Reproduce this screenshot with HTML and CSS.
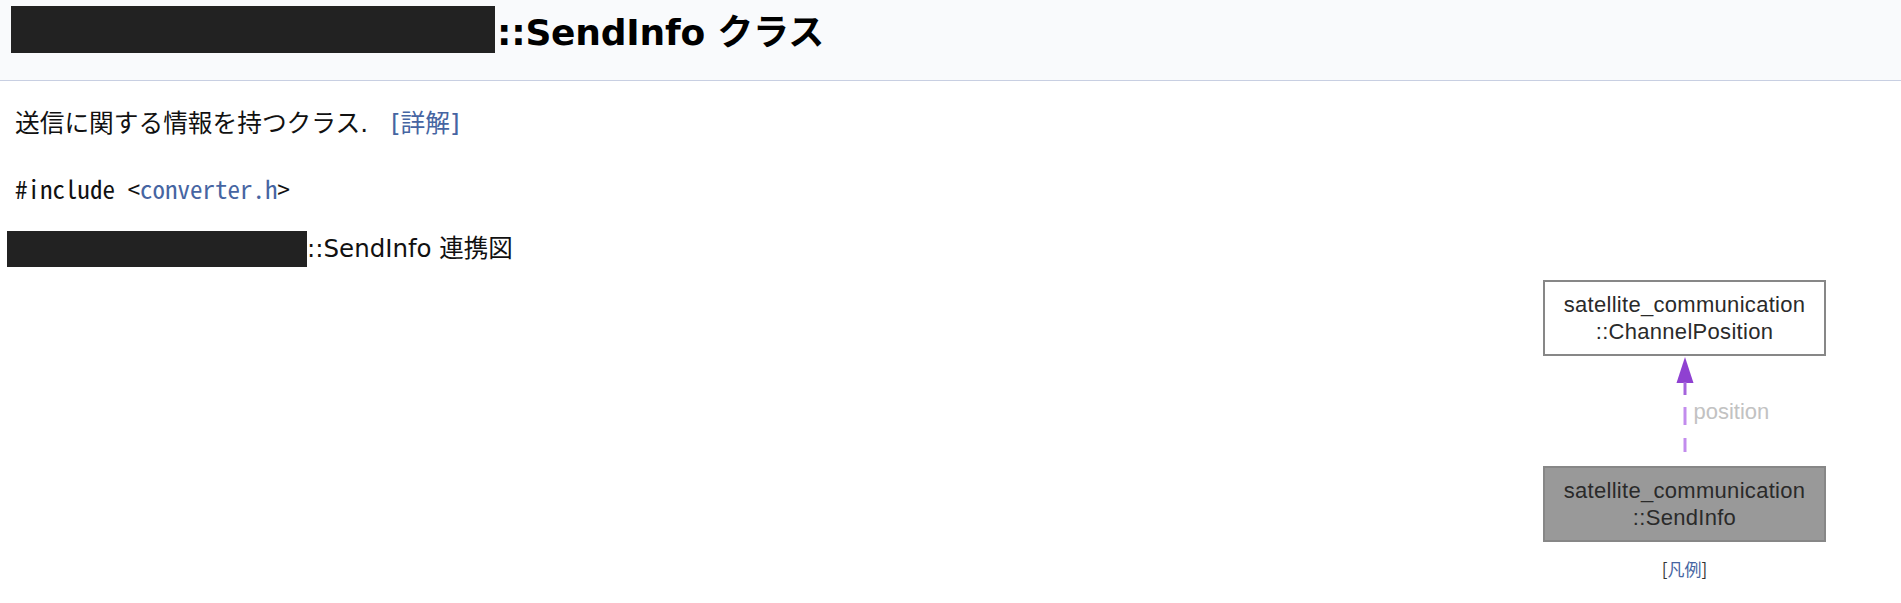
FILE: index.html
```html
<!DOCTYPE html>
<html lang="ja">
<head>
<meta charset="utf-8">
<title>SendInfo クラス</title>
<link rel="stylesheet" href="styles.css">
</head>
<body>
<div class="header">
  <div class="title"><span class="redact redact-title"></span><span class="title-text">::SendInfo クラス</span></div>
</div>
<div class="contents">
  <p class="brief">送信に関する情報を持つクラス.<a class="link more" href="#details">[詳解]</a></p>
  <p class="include"><code>#include &lt;<a class="link" href="#file">converter.h</a>&gt;</code></p>
  <div class="dynheader"><span class="redact redact-heading"></span><span class="dynheader-text">::SendInfo 連携図</span></div>
  <div class="dyncontent">
    <div class="graph">
      <div class="node">satellite_communication<br>::ChannelPosition</div>
      <div class="edge">
        <svg class="arrow" width="18" height="110" viewBox="0 0 18 110">
          <polygon points="9,1 0.5,27 17.5,27" fill="#8f41d1"/>
          <line x1="9" y1="26" x2="9" y2="39" stroke="#a564dc" stroke-width="3"/>
          <line x1="9" y1="51" x2="9" y2="69" stroke="#c28ced" stroke-width="3"/>
          <line x1="9" y1="82" x2="9" y2="96" stroke="#c28ced" stroke-width="3"/>
        </svg>
        <span class="edge-label">position</span>
      </div>
      <div class="node node-current">satellite_communication<br>::SendInfo</div>
      <div class="legend">[<a class="link" href="#legend">凡例</a>]</div>
    </div>
  </div>
</div>
</body>
</html>
```

FILE: styles.css
```css
html, body {
  margin: 0;
  padding: 0;
  background: #ffffff;
}

body {
  font-family: "DejaVu Sans", "Noto Sans CJK JP", sans-serif;
  color: #000000;
  overflow: hidden;
}

.header {
  box-sizing: border-box;
  height: 81px;
  padding: 6px 0 0 11px;
  background: #f9fafc;
  border-bottom: 1px solid #c8cfe2;
}

.title {
  display: flex;
  align-items: center;
  height: 47px;
  font-size: 36px;
  font-weight: bold;
  letter-spacing: -0.2px;
  white-space: nowrap;
}

.title-text {
  margin-left: 2px;
  margin-bottom: 2px;
}

.redact {
  display: inline-block;
  background: #222222;
  flex: none;
}

.redact-title {
  width: 484px;
  height: 47px;
}

.redact-heading {
  width: 300px;
  height: 36px;
}

.contents {
  display: flex;
  flex-direction: column;
}

.brief {
  margin: 25px 0 0 15px;
  height: 35px;
  font-size: 24.7px;
  line-height: 35px;
  color: #111111;
}

.more {
  margin-left: 23px;
}

.link {
  color: #4665a2;
  text-decoration: none;
}

.include {
  margin: 29.5px 0 0 15px;
  height: 35px;
  font-family: "Noto Sans Mono CJK JP", "Liberation Mono", monospace;
  font-size: 25px;
  line-height: 35px;
  color: #111111;
}

.include code {
  font: inherit;
}

.dynheader {
  display: flex;
  align-items: center;
  margin-top: 25.5px;
  padding-left: 7px;
  height: 36px;
  font-size: 24.5px;
  color: #111111;
  white-space: nowrap;
}

.dynheader-text {
  margin-bottom: 6px;
}

.dyncontent {
  display: flex;
  justify-content: flex-end;
  margin-top: 13px;
  padding-right: 75px;
}

.graph {
  display: flex;
  flex-direction: column;
  width: 283px;
}

.node {
  box-sizing: border-box;
  height: 76px;
  display: flex;
  align-items: center;
  justify-content: center;
  border: 2px solid #878787;
  background: #ffffff;
  font-family: "Liberation Sans", Arial, sans-serif;
  font-size: 22px;
  line-height: 27px;
  letter-spacing: 0.3px;
  text-align: center;
  color: #2a2a2a;
}

.node-current {
  background: #999999;
}

.edge {
  display: grid;
  grid-template-columns: 1fr 18px 1fr;
  height: 110px;
}

.arrow {
  grid-column: 2;
  display: block;
}

.edge-label {
  grid-column: 3;
  align-self: center;
  padding-top: 2px;
  font-family: "Liberation Sans", Arial, sans-serif;
  font-size: 22px;
  line-height: 26px;
  color: #c2c2c2;
}

.legend {
  margin-top: 14.5px;
  text-align: center;
  font-family: "Noto Sans CJK JP", sans-serif;
  font-size: 17px;
  line-height: 24px;
  color: #333333;
}
```
